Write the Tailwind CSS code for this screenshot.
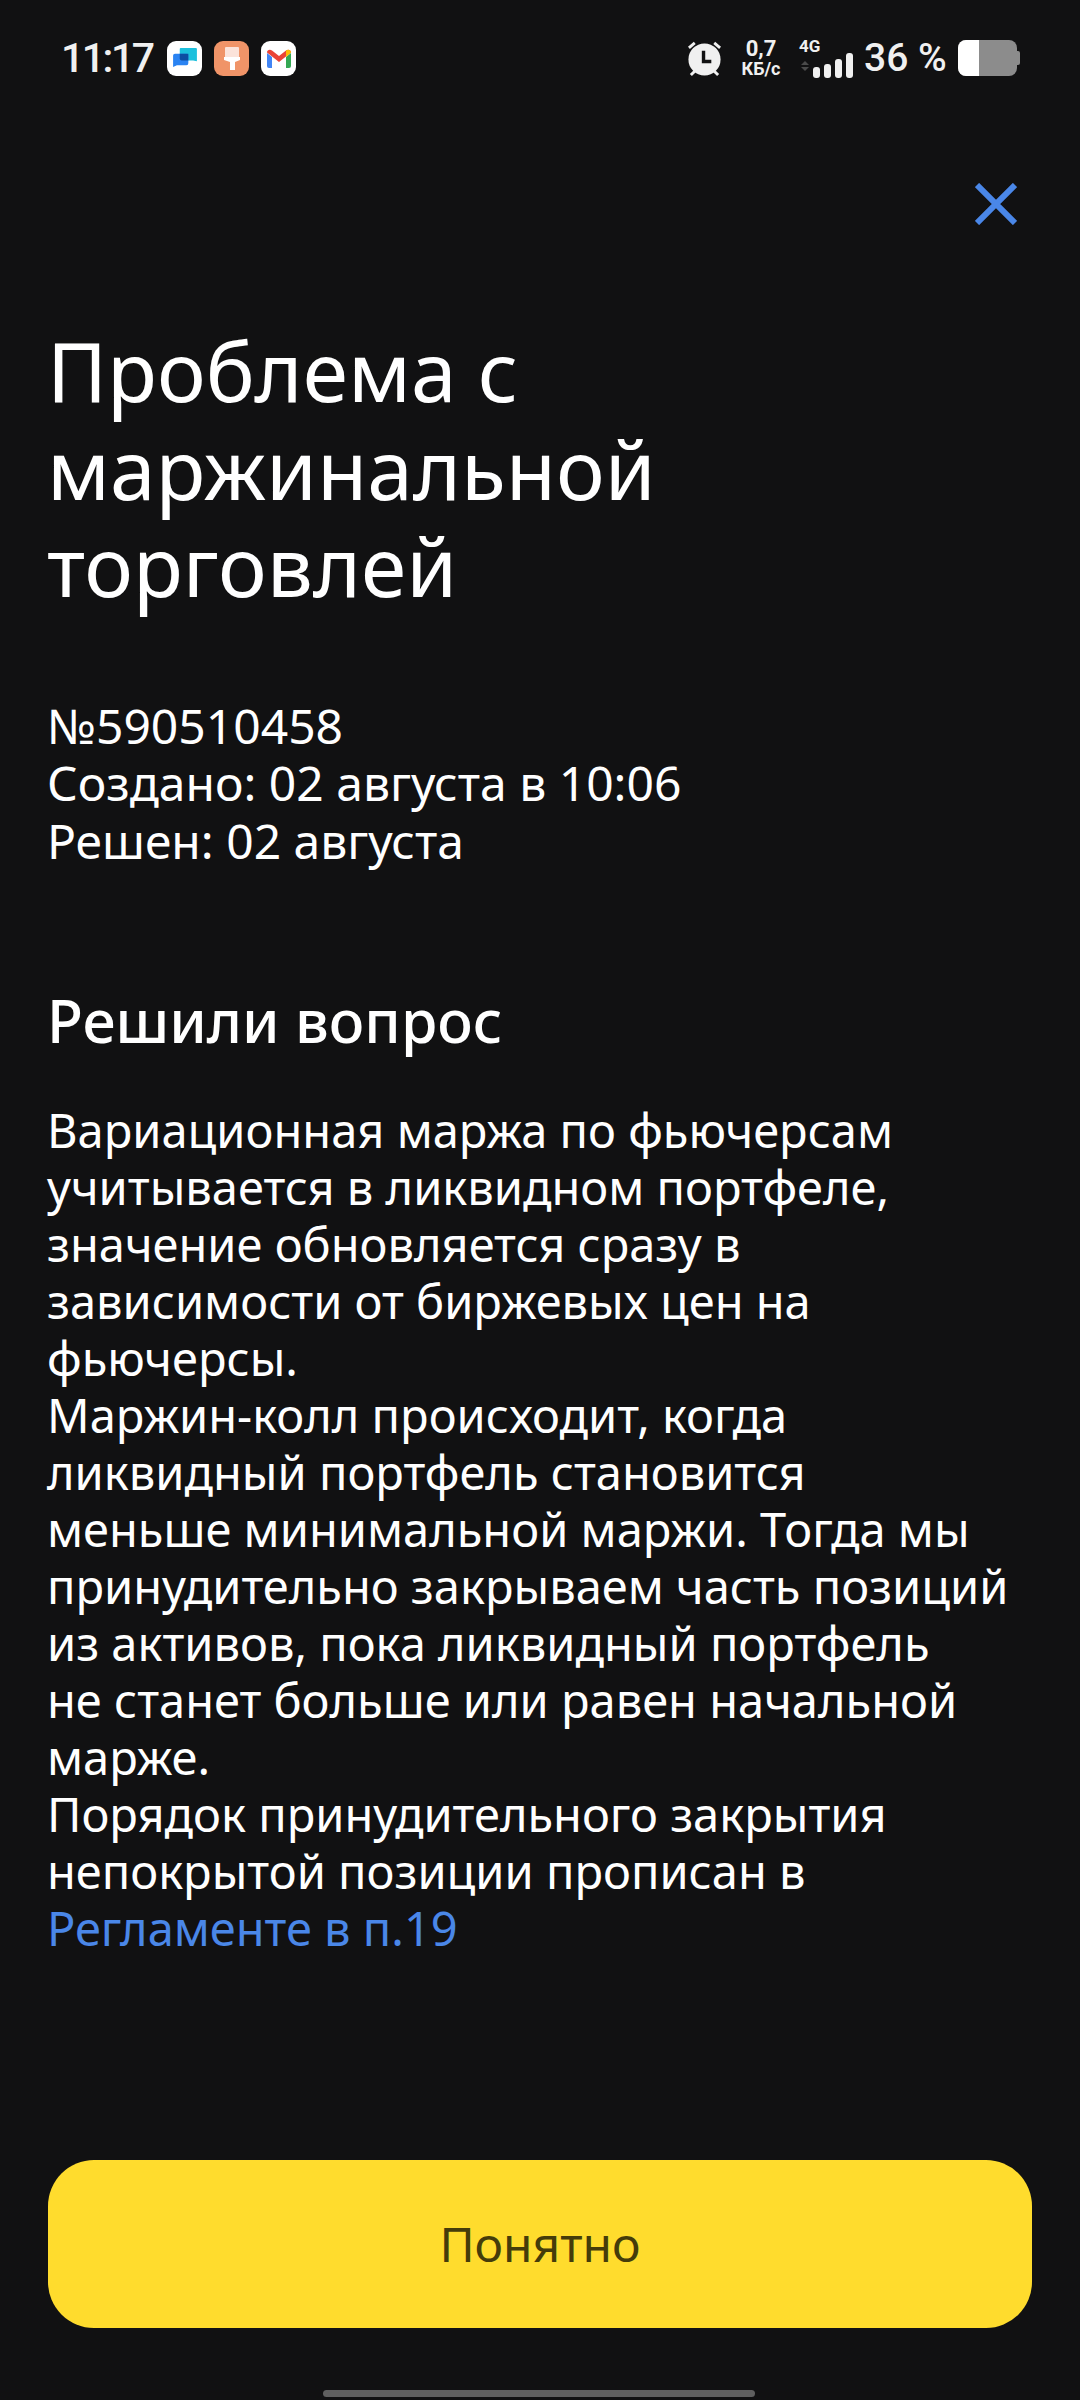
<!DOCTYPE html>
<html lang="ru">

<head>
    <meta charset="UTF-8">
    <meta name="viewport" content="width=device-width, initial-scale=1.0">
    <script src="https://cdn.jsdelivr.net/npm/@tailwindcss/browser@4"></script>
    <title>Проблема с маржинальной торговлей</title>
</head>

<body class="bg-[#111112]">
    <div class="w-[1080px] h-[2400px] overflow-hidden flex flex-col bg-[#111112] text-white font-['Noto_Sans',sans-serif]">

        <!-- status bar -->
        <header class="h-[116px] pl-[61px] pr-[60px] pt-[40px] flex items-start justify-between text-[#f0f0f0]">
            <div class="flex items-center h-[36px]">
                <span class="w-[90px] text-[41px] font-medium leading-none tracking-[-2.500px] font-['Roboto',sans-serif]">11:17</span>
                <div class="ml-[16px] flex gap-[12px]">
                    <span class="w-[35px] h-[35px] rounded-[9px] bg-white flex items-center justify-center">
                        <svg width="24" height="20" viewBox="0 0 25 21">
                            <path d="M7 1a1 1 0 0 1 1-1h16a1 1 0 0 1 1 1v13l-4-1H7z" fill="#1cc0dd" />
                            <path d="M0 8a2 2 0 0 1 2-2h12a2 2 0 0 1 2 2v8a2 2 0 0 1-2 2H4l-4 2z" fill="#2a83f2" />
                            <path d="M7 6h9v7H9a2 2 0 0 1-2-2z" fill="#0c4da2" />
                        </svg>
                    </span>
                    <span class="w-[35px] h-[35px] rounded-[9px] bg-[#f09468] flex items-center justify-center">
                        <svg width="16" height="23" viewBox="0 0 16 23">
                            <path d="M1 1a1 1 0 0 1 1-1h12a1 1 0 0 1 1 1v9H1z" fill="#fbe3da" />
                            <path d="M0 10h16v3l-5 2v8H6v-8l-6-2z" fill="#fff" />
                        </svg>
                    </span>
                    <span class="w-[35px] h-[35px] rounded-[9px] bg-white flex items-center justify-center">
                        <svg width="24" height="19" viewBox="0 0 24 19">
                            <path d="M0 4v13a2 2 0 0 0 2 2h3V8z" fill="#4285f4" />
                            <path d="M19 8v11h3a2 2 0 0 0 2-2V4z" fill="#34a853" />
                            <path d="M0 3.500C0 .8 3 0 5 1.500L12 7l7-5.500C21 0 24 .8 24 3.500L12 13z" fill="#ea4335" />
                            <path d="M19 1.500C21 0 24 .8 24 3.500L19 8z" fill="#fbbc04" />
                        </svg>
                    </span>
                </div>
            </div>
            <div class="flex items-center h-[36px]">
                <svg width="37" height="37" viewBox="0 0 38 38">
                    <circle cx="19" cy="20" r="16.500" fill="#f0f0f0" />
                    <path d="M3 8l6-5M35 8l-6-5M5 36l4-4M33 36l-4-4" stroke="#f0f0f0" stroke-width="3" />
                    <path d="M18 11v11h8" stroke="#111112" stroke-width="3.500" fill="none" />
                </svg>
                <div class="ml-[16px] w-[44px] flex flex-col items-center font-bold leading-none font-['Roboto',sans-serif]">
                    <span class="text-[22px] h-[22px]">0,7</span>
                    <span class="text-[18px] h-[18px] whitespace-nowrap">КБ/с</span>
                </div>
                <div class="ml-[16px] w-[55px] flex flex-col">
                    <span class="text-[17px] font-bold leading-none h-[15px] font-['Roboto',sans-serif]">4G</span>
                    <svg width="55" height="25" viewBox="0 0 55 25">
                        <path d="M2 12l4-4 4 4zM2 14h8l-4 4z" fill="#4a4a4a" />
                        <rect x="14" y="14" width="7" height="11" rx="3" fill="#f0f0f0" />
                        <rect x="25" y="11" width="7" height="14" rx="3" fill="#f0f0f0" />
                        <rect x="36" y="6" width="7" height="19" rx="3" fill="#f0f0f0" />
                        <rect x="47" y="0" width="7" height="25" rx="3" fill="#f0f0f0" />
                    </svg>
                </div>
                <span class="ml-[10px] w-[84px] text-[39px] font-medium leading-none whitespace-nowrap font-['Roboto',sans-serif]">36 %</span>
                <div class="ml-[10px] w-[59px] h-[36px] rounded-[8px] bg-[#8c8c8c] overflow-hidden">
                    <div class="w-[21px] h-full bg-white"></div>
                </div>
                <div class="w-[3px] h-[14px] bg-[#8c8c8c] rounded-r-[2px]"></div>
            </div>
        </header>

        <!-- close -->
        <div class="h-[44px] mt-[67px] pr-[63px] flex justify-end">
            <svg width="42" height="42" viewBox="0 0 42 42">
                <path d="M2 2l38 38M40 2L2 40" stroke="#4a87e8" stroke-width="6" fill="none" />
            </svg>
        </div>

        <main class="px-[47px] flex-1">
            <h1 class="mt-[95px] text-[82px] leading-[97.500px] font-normal">Проблема с<br>маржинальной<br>торговлей</h1>

            <p class="mt-[82px] text-[48px] leading-[57.600px]">№590510458<br>Создано: 02 августа в 10:06<br>Решен: 02 августа</p>

            <h2 class="mt-[116px] text-[59px] leading-[70px] font-medium">Решили вопрос</h2>

            <p class="mt-[47px] text-[47px] leading-[57px] whitespace-nowrap">
                Вариационная маржа по фьючерсам<br>
                учитывается в ликвидном портфеле,<br>
                значение обновляется сразу в<br>
                зависимости от биржевых цен на<br>
                фьючерсы.<br>
                Маржин-колл происходит, когда<br>
                ликвидный портфель становится<br>
                меньше минимальной маржи. Тогда мы<br>
                принудительно закрываем часть позиций<br>
                из активов, пока ликвидный портфель<br>
                не станет больше или равен начальной<br>
                марже.<br>
                Порядок принудительного закрытия<br>
                непокрытой позиции прописан в<br>
                <a href="#" class="text-[#4a87e8]">Регламенте в п.19</a>
            </p>
        </main>

        <!-- button -->
        <div class="px-[48px] pb-[72px]">
            <button class="w-[984px] h-[168px] rounded-[46px] bg-[#ffdc2d] text-[#453c0a] text-[48px] font-['Noto_Sans',sans-serif]">Понятно</button>
        </div>
        <div class="relative">
            <div class="absolute left-[323px] bottom-[3px] w-[432px] h-[7px] rounded-full bg-[#5f5f5f]"></div>
        </div>
    </div>
</body>

</html>
